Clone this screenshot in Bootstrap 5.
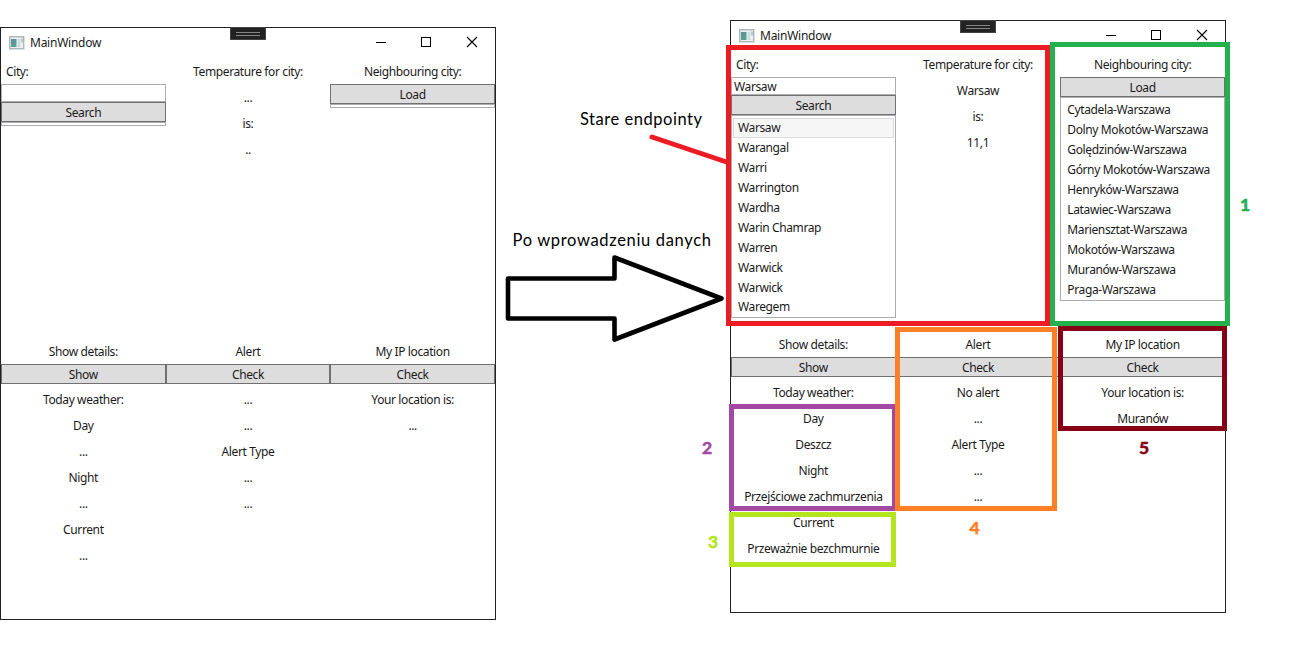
<!DOCTYPE html>
<html lang="pl">
<head>
<meta charset="utf-8">
<meta name="viewport" content="width=device-width, initial-scale=1">
<title>MainWindow</title>
<link href="https://cdn.jsdelivr.net/npm/bootstrap@5.3.0/dist/css/bootstrap.min.css" rel="stylesheet">
<style>
body{background:#fff;color:#1a1a1a;font-family:"Noto Sans","Open Sans",sans-serif;font-size:12px;line-height:16px;overflow:hidden;letter-spacing:-.38px}
.stage{width:1314px;height:656px}
.win{width:496px;height:593px;border:1px solid #222;background:#fff}
.win-left{margin-top:27px}
.win-right{margin-top:20px}
.middle{width:234px}
.titlebar{height:30px;padding-left:8px}
.titlebar .caption{margin-left:5px;letter-spacing:-.25px}
.titlebar .controls{margin-right:9px;margin-top:-2px}
.grip{top:-1px;left:229px;width:36px;height:13px;background:#222;border:1px solid #444}
.grip svg{display:block}
.upper{height:280px}
.third{width:33.3333%}
.lbl{height:26px;padding-top:6px;text-align:center;white-space:nowrap}
.lbl.start{text-align:left;padding-left:5px}
.field{height:18px;border:1px solid #abadb3;padding:0 2px;line-height:17px}
.flat{display:block;width:100%;height:20px;padding:0;border:1px solid #707070;border-radius:0;background:#ddd;color:#1a1a1a;font-size:inherit;line-height:20px;letter-spacing:inherit}
.results{border:1px solid #abadb3;padding:1px;border-radius:0}
.results.full{height:204px;padding:2px 1px}
.results.cities{height:203px}
.item{height:20px;padding:1px 4px 0;border:1px solid transparent;line-height:16px;white-space:nowrap}
.item.active-row{background:#f6f6f6;border-color:#dadada}
.cities .item:last-child{padding-top:0}
.details{padding-top:2px}
.marks{left:0;top:0;pointer-events:none}
.note{font-family:Lato,sans-serif;font-size:16.5px;letter-spacing:0;fill:#000}
.num{font-family:Lato,sans-serif;font-weight:700;font-size:17.5px;letter-spacing:0;stroke-width:.6px}
</style>
<script src="https://cdn.jsdelivr.net/npm/bootstrap@5.3.0/dist/js/bootstrap.bundle.min.js"></script>
</head>
<body>
<svg width="0" height="0" class="position-absolute" aria-hidden="true">
<defs>
<linearGradient id="teal" x1="0" y1="0" x2="1" y2="1"><stop offset="0" stop-color="#5f8fa0"/><stop offset="1" stop-color="#52a58a"/></linearGradient>
<symbol id="app" viewBox="0 0 16 14"><rect x=".75" y=".75" width="14" height="12" fill="#eef1f1" stroke="#a9b0b3" stroke-width="1.300"/><rect x="2" y="3" width="5.500" height="8" fill="url(#teal)"/><rect x="8.500" y="3" width="3" height="8" fill="#d3dcdc"/><rect x="12" y="2.500" width="2" height="4" fill="#b3cfcd"/></symbol>
<symbol id="controls" viewBox="0 0 110 12"><path d="M0 6.5h10" stroke="#000" fill="none"/><rect x="45.500" y="1.500" width="9" height="9" fill="none" stroke="#000"/><path d="M91 1l10 10M101 1L91 11" stroke="#000" stroke-width="1.1" fill="none"/></symbol>
<symbol id="gripbars" viewBox="0 0 34 11"><path d="M5 4.500h24M5 7.500h24" stroke="#858585" fill="none"/></symbol>
</defs>
</svg>
<main class="stage position-relative d-flex align-items-start">
  <section class="win win-left position-relative flex-shrink-0">
    <div class="grip position-absolute"><svg width="34" height="11"><use href="#gripbars"/></svg></div>
    <header class="titlebar d-flex align-items-center"><svg width="16" height="14"><use href="#app"/></svg><span class="caption">MainWindow</span><svg class="controls ms-auto" width="110" height="12"><use href="#controls"/></svg></header>
    <div class="upper d-flex">
      <div class="third"><div class="lbl start">City:</div><div class="field"></div><button class="flat">Search</button><div class="results"></div></div>
      <div class="third"><div class="lbl">Temperature for city:</div><div class="lbl">...</div><div class="lbl">is:</div><div class="lbl">..</div></div>
      <div class="third"><div class="lbl">Neighbouring city:</div><button class="flat">Load</button><div class="results"></div></div>
    </div>
    <div class="d-flex">
      <div class="third"><div class="lbl">Show details:</div><button class="flat">Show</button><div class="details"><div class="lbl">Today weather:</div><div class="lbl">Day</div><div class="lbl">...</div><div class="lbl">Night</div><div class="lbl">...</div><div class="lbl">Current</div><div class="lbl">...</div></div></div>
      <div class="third"><div class="lbl">Alert</div><button class="flat">Check</button><div class="details"><div class="lbl">...</div><div class="lbl">...</div><div class="lbl">Alert Type</div><div class="lbl">...</div><div class="lbl">...</div></div></div>
      <div class="third"><div class="lbl">My IP location</div><button class="flat">Check</button><div class="details"><div class="lbl">Your location is:</div><div class="lbl">...</div></div></div>
    </div>
  </section>
  <div class="middle flex-shrink-0"></div>
  <section class="win win-right position-relative flex-shrink-0">
    <div class="grip position-absolute"><svg width="34" height="11"><use href="#gripbars"/></svg></div>
    <header class="titlebar d-flex align-items-center"><svg width="16" height="14"><use href="#app"/></svg><span class="caption">MainWindow</span><svg class="controls ms-auto" width="110" height="12"><use href="#controls"/></svg></header>
    <div class="upper d-flex">
      <div class="third"><div class="lbl start">City:</div><div class="field">Warsaw</div><button class="flat">Search</button>
        <div class="results full cities"><div class="item active-row">Warsaw</div><div class="item">Warangal</div><div class="item">Warri</div><div class="item">Warrington</div><div class="item">Wardha</div><div class="item">Warin Chamrap</div><div class="item">Warren</div><div class="item">Warwick</div><div class="item">Warwick</div><div class="item">Waregem</div></div></div>
      <div class="third"><div class="lbl">Temperature for city:</div><div class="lbl">Warsaw</div><div class="lbl">is:</div><div class="lbl">11,1</div></div>
      <div class="third"><div class="lbl">Neighbouring city:</div><button class="flat">Load</button>
        <div class="results full"><div class="item">Cytadela-Warszawa</div><div class="item">Dolny Mokotów-Warszawa</div><div class="item">Golędzinów-Warszawa</div><div class="item">Górny Mokotów-Warszawa</div><div class="item">Henryków-Warszawa</div><div class="item">Latawiec-Warszawa</div><div class="item">Mariensztat-Warszawa</div><div class="item">Mokotów-Warszawa</div><div class="item">Muranów-Warszawa</div><div class="item">Praga-Warszawa</div></div></div>
    </div>
    <div class="d-flex">
      <div class="third"><div class="lbl">Show details:</div><button class="flat">Show</button><div class="details"><div class="lbl">Today weather:</div><div class="lbl">Day</div><div class="lbl">Deszcz</div><div class="lbl">Night</div><div class="lbl">Przejściowe zachmurzenia</div><div class="lbl">Current</div><div class="lbl">Przeważnie bezchmurnie</div></div></div>
      <div class="third"><div class="lbl">Alert</div><button class="flat">Check</button><div class="details"><div class="lbl">No alert</div><div class="lbl">...</div><div class="lbl">Alert Type</div><div class="lbl">...</div><div class="lbl">...</div></div></div>
      <div class="third"><div class="lbl">My IP location</div><button class="flat">Check</button><div class="details"><div class="lbl">Your location is:</div><div class="lbl">Muranów</div></div></div>
    </div>
  </section>
  <svg class="marks position-absolute" width="1314" height="656" viewBox="0 0 1314 656">
    <g fill="none" stroke-width="5">
      <path d="M652 137L728 162.500" stroke="#ed1c24" stroke-linecap="round"/>
      <rect x="728.500" y="47.500" width="319" height="276" stroke="#ed1c24"/>
      <rect x="1052.500" y="44.500" width="175" height="279" stroke="#22b14c"/>
      <rect x="731.500" y="406.500" width="163" height="102" stroke="#a349a4"/>
      <rect x="731.500" y="514.500" width="162" height="50" stroke="#b5e61d"/>
      <rect x="897.500" y="329.500" width="157" height="179" stroke="#ff7f27"/>
      <rect x="1060.500" y="328.500" width="164" height="100" stroke="#880015"/>
      <path d="M508 278.500H614.500V257.500L721.500 298.500L614.500 339.500V318.500H508Z" stroke="#000" stroke-width="4.600" stroke-linejoin="round"/>
    </g>
    <text class="note" x="580" y="125" textLength="122">Stare endpointy</text>
    <text class="note" x="512.500" y="246" textLength="198.500">Po wprowadzeniu danych</text>
    <g class="num" text-anchor="middle">
      <text x="1245" y="211" fill="#22b14c" stroke="#22b14c">1</text>
      <text x="707" y="454" fill="#a349a4" stroke="#a349a4">2</text>
      <text x="713" y="548" fill="#b5e61d" stroke="#b5e61d">3</text>
      <text x="974.500" y="534" fill="#ff7f27" stroke="#ff7f27">4</text>
      <text x="1144" y="454" fill="#880015" stroke="#880015">5</text>
    </g>
  </svg>
</main>
</body>
</html>
